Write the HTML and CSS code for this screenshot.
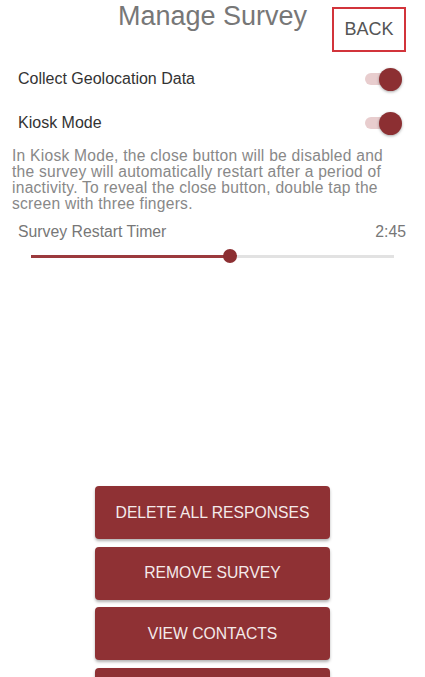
FILE: index.html
```html
<!DOCTYPE html>
<html>
<head>
<meta charset="utf-8">
<link rel="stylesheet" href="styles.css">
</head>
<body>
<div class="page">
  <header class="header">
    <div></div>
    <h1 class="title">Manage Survey</h1>
    <div class="back-wrap"><button class="back">BACK</button></div>
  </header>
  <div class="row">
    <span class="label">Collect Geolocation Data</span>
    <span class="toggle"><span class="knob"></span></span>
  </div>
  <div class="row">
    <span class="label">Kiosk Mode</span>
    <span class="toggle"><span class="knob"></span></span>
  </div>
  <p class="note">In Kiosk Mode, the close button will be disabled and the survey will automatically restart after a period of inactivity. To reveal the close button, double tap the screen with three fingers.</p>
  <div class="timer">
    <span>Survey Restart Timer</span>
    <span>2:45</span>
  </div>
  <div class="slider">
    <div class="fill" style="width:54.8%"><span class="thumb"></span></div>
  </div>
  <div class="actions">
    <button class="btn">DELETE ALL RESPONSES</button>
    <button class="btn">REMOVE SURVEY</button>
    <button class="btn">VIEW CONTACTS</button>
    <button class="btn"></button>
  </div>
</div>
</body>
</html>
```
FILE: styles.css
```css
html, body {
  margin: 0;
  padding: 0;
  background: #fff;
  font-family: "Liberation Sans", Arial, sans-serif;
}
.page {
  width: 425px;
  height: 677px;
  overflow: hidden;
}
.header {
  display: grid;
  grid-template-columns: 1fr auto 1fr;
  height: 52px;
}
.title {
  margin: 0;
  font-size: 27px;
  line-height: 32px;
  font-weight: normal;
  color: #777;
}
.back-wrap {
  display: flex;
  justify-content: flex-end;
  align-items: flex-start;
  padding-right: 19px;
}
.back {
  margin-top: 7px;
  width: 74px;
  height: 45px;
  box-sizing: border-box;
  border: 2px solid #d2343b;
  background: #fff;
  color: #555;
  font-family: inherit;
  font-size: 18px;
  padding: 0;
}
.header + .row { margin-top: 5px; }
.row {
  display: flex;
  align-items: center;
  justify-content: space-between;
  height: 44px;
  padding: 0 23px 0 18px;
}
.label {
  font-size: 16px;
  color: #333;
}
.toggle {
  position: relative;
  width: 37px;
  height: 23px;
}
.toggle::before {
  content: "";
  position: absolute;
  left: 0;
  right: 6px;
  top: 5px;
  height: 12px;
  border-radius: 6px;
  background: #e8cdce;
}
.knob {
  position: absolute;
  right: 0;
  top: 0;
  width: 23px;
  height: 23px;
  border-radius: 50%;
  background: #8c2f32;
  box-shadow: 0 1px 3px rgba(0,0,0,0.35);
}
.note {
  margin: 3px 27px 0 12px;
  font-size: 15.6px;
  letter-spacing: 0.25px;
  line-height: 16px;
  color: #888;
}
.timer {
  display: flex;
  justify-content: space-between;
  margin-top: 10px;
  padding: 0 19px 0 18px;
  font-size: 15.8px;
  line-height: 20px;
  color: #777;
}
.slider {
  position: relative;
  margin: 13px 31px 0 31px;
  height: 3px;
  background: #e2e2e2;
}
.fill {
  position: relative;
  height: 3px;
  background: #9b3a3d;
}
.thumb {
  position: absolute;
  right: -7px;
  top: -6px;
  width: 14px;
  height: 14px;
  border-radius: 50%;
  background: #8c2f32;
}
.actions {
  display: flex;
  flex-direction: column;
  align-items: center;
  gap: 7.5px;
  margin-top: 228px;
}
.btn {
  width: 235px;
  height: 53px;
  flex-shrink: 0;
  border: none;
  border-radius: 4px;
  background: #8f3134;
  color: #f4eaea;
  font-family: inherit;
  font-size: 15.7px;
  box-shadow: 0 2px 3px rgba(0,0,0,0.3);
  padding: 0;
}
```
